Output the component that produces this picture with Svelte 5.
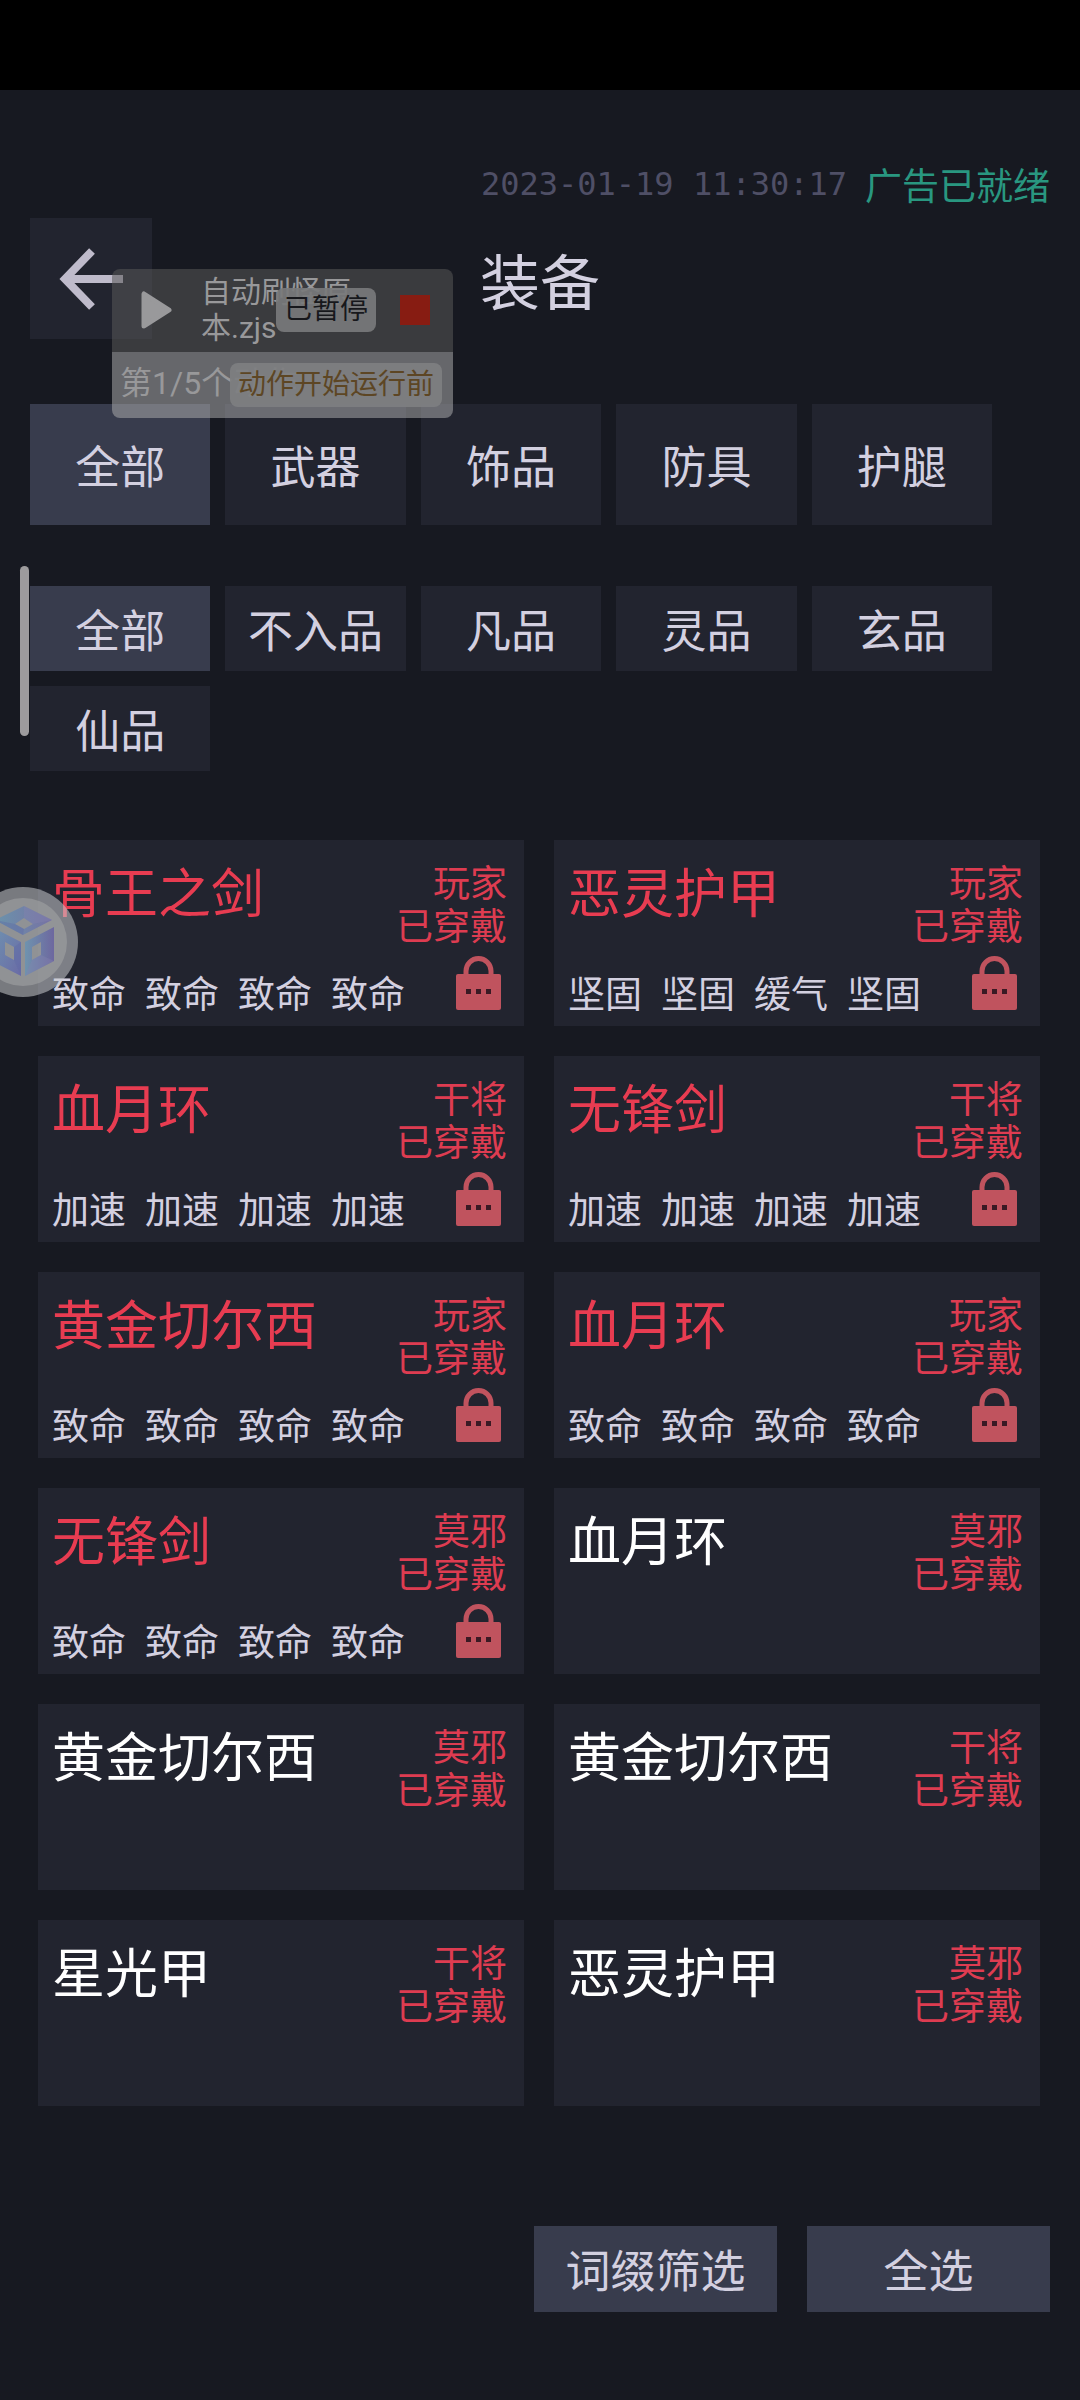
<script>
  const slots = ["全部", "武器", "饰品", "防具", "护腿"];
  const grades = ["全部", "不入品", "凡品", "灵品", "玄品", "仙品"];

  const items = [
    { name: "骨王之剑", owner: "玩家", rare: true, affixes: ["致命", "致命", "致命", "致命"] },
    { name: "恶灵护甲", owner: "玩家", rare: true, affixes: ["坚固", "坚固", "缓气", "坚固"] },
    { name: "血月环", owner: "干将", rare: true, affixes: ["加速", "加速", "加速", "加速"] },
    { name: "无锋剑", owner: "干将", rare: true, affixes: ["加速", "加速", "加速", "加速"] },
    { name: "黄金切尔西", owner: "玩家", rare: true, affixes: ["致命", "致命", "致命", "致命"] },
    { name: "血月环", owner: "玩家", rare: true, affixes: ["致命", "致命", "致命", "致命"] },
    { name: "无锋剑", owner: "莫邪", rare: true, affixes: ["致命", "致命", "致命", "致命"] },
    { name: "血月环", owner: "莫邪", rare: false, affixes: [] },
    { name: "黄金切尔西", owner: "莫邪", rare: false, affixes: [] },
    { name: "黄金切尔西", owner: "干将", rare: false, affixes: [] },
    { name: "星光甲", owner: "干将", rare: false, affixes: [] },
    { name: "恶灵护甲", owner: "莫邪", rare: false, affixes: [] },
  ];

  let slot = $state("全部");
  let grade = $state("全部");
</script>

<div class="statusbar"></div>

<main class="page">
  <div class="info">
    <time class="info__time" datetime="2023-01-19T11:30:17">2023-01-19 11:30:17</time>
    <span class="info__ad">广告已就绪</span>
  </div>

  <header class="header">
    <button class="back" aria-label="返回">
      <svg width="64" height="62" viewBox="0 0 64 62" fill="none" stroke="currentColor" stroke-width="8">
        <path d="M33 3 L6 31 L33 59 M6 31 H64" />
      </svg>
    </button>
    <h1 class="header__title">装备</h1>
  </header>

  <nav class="tabs">
    {#each slots as label}
      <button class="tab tab--tall" class:tab--active={slot === label} onclick={() => (slot = label)}>
        {label}
      </button>
    {/each}
  </nav>

  <nav class="tabs tabs--grade">
    {#each grades as label}
      <button class="tab" class:tab--active={grade === label} onclick={() => (grade = label)}>
        {label}
      </button>
    {/each}
  </nav>

  <section class="items">
    {#each items as item}
      <article class="card">
        <div class="card__top">
          <h2 class="card__name" class:card__name--rare={item.rare}>{item.name}</h2>
          <p class="card__owner">{item.owner}<br />已穿戴</p>
        </div>
        {#if item.affixes.length}
          <div class="card__bottom">
            <div class="card__affixes">
              {#each item.affixes as affix}
                <span>{affix}</span>
              {/each}
            </div>
            <svg class="card__lock" width="45" height="54" viewBox="0 0 45 54">
              <path d="M10 20 V15 A12.5 12.5 0 0 1 35 15 V20" fill="none" stroke="#c0535e" stroke-width="5" />
              <rect y="18" width="45" height="36" rx="2" fill="#c0535e" />
              <path d="M10 33h5v5h-5z M20 33h5v5h-5z M30 33h5v5h-5z" fill="#3a1a24" />
            </svg>
          </div>
        {/if}
      </article>
    {/each}
  </section>

  <footer class="actions">
    <button class="action">词缀筛选</button>
    <button class="action">全选</button>
  </footer>
</main>

<!-- floating script runner -->
<aside class="runner">
  <div class="runner__head">
    <button class="runner__button" aria-label="继续">
      <svg width="31" height="38" viewBox="0 0 31 38">
        <path d="M3 3 V35 L28 19 Z" fill="#99999b" stroke="#99999b" stroke-width="5" stroke-linejoin="round" />
      </svg>
    </button>
    <div class="runner__name">自动刷怪原本.zjs</div>
    <button class="runner__button runner__stop" aria-label="停止"></button>
  </div>
  <div class="runner__step">第1/5个动作</div>
  <div class="toast toast--state">已暂停</div>
  <div class="toast toast--event">动作开始运行前</div>
</aside>

<div class="edge-handle"></div>

<button class="ball" aria-label="悬浮球">
  <svg width="110" height="110" viewBox="0 0 110 110">
    <defs>
      <linearGradient id="face-top" x1="0" y1="0" x2="1" y2="0">
        <stop offset="0" stop-color="#6b93ab" />
        <stop offset="1" stop-color="#7672a4" />
      </linearGradient>
      <linearGradient id="face-left" x1="0" y1="0" x2="1" y2="1">
        <stop offset="0" stop-color="#6f93b0" />
        <stop offset="1" stop-color="#6a6ba6" />
      </linearGradient>
      <linearGradient id="face-right" x1="0" y1="0" x2="1" y2="0">
        <stop offset="0" stop-color="#6f93ae" />
        <stop offset="1" stop-color="#6d679f" />
      </linearGradient>
    </defs>
    <circle cx="55" cy="55" r="55" fill="#c9cbce" fill-opacity="0.55" />
    <circle cx="55" cy="55" r="44" fill="#a0a2a4" fill-opacity="0.6" />
    <path d="M56 19 L84 33 L55 48 L27 33 Z M56 31 L47 37 L56 42 L65 37 Z" fill="url(#face-top)" fill-rule="evenodd" />
    <path d="M24 40 L53 55 V89 L24 74 Z M37 55 V68 L46 73 V60 Z" fill="url(#face-left)" fill-rule="evenodd" />
    <path d="M86 40 V74 L57 89 V55 Z M73 55 L64 60 V73 L73 68 Z" fill="url(#face-right)" fill-rule="evenodd" />
    <path d="M56 19 L84 33 L65 37 L56 31 Z M86 74 L57 89 L64 73 L73 68 Z" fill="#8583b0" fill-opacity="0.4" />
    <path d="M27 33 L55 48 L56 42 L47 37 Z M53 55 V89 L46 73 V60 Z" fill="#5f6aa6" fill-opacity="0.4" />
  </svg>
</button>

<style>
  :global(body) {
    margin: 0;
    background: #171921;
    color: #d3d0e0;
    font-family: "Noto Sans CJK SC", sans-serif;
  }

  button {
    margin: 0;
    padding: 0;
    border: none;
    background: none;
    color: inherit;
    font: inherit;
    cursor: pointer;
  }

  svg {
    display: block;
  }

  .statusbar {
    height: 90px;
    background: #000;
  }

  .page {
    padding: 72px 30px 88px;
  }

  .info {
    display: flex;
    justify-content: flex-end;
    align-items: center;
    gap: 18px;
    line-height: 44px;
  }

  .info__time {
    color: #4f4f66;
    font-family: "DejaVu Sans Mono", monospace;
    font-size: 32px;
  }

  .info__ad {
    color: #299780;
    font-size: 37px;
  }

  .header {
    display: grid;
    grid-template-columns: 122px 1fr 122px;
    align-items: center;
    margin-top: 12px;
  }

  .back {
    display: flex;
    align-items: center;
    justify-content: center;
    height: 121px;
    background: #22242f;
    color: #bfbbcb;
  }

  .header__title {
    margin: 0;
    font-size: 60px;
    font-weight: 400;
    line-height: 80px;
    text-align: center;
  }

  .tabs {
    display: grid;
    grid-template-columns: repeat(5, 1fr);
    gap: 15px;
    margin: 65px 58px 0 0;
  }

  .tabs--grade {
    margin-top: 61px;
  }

  .tab {
    height: 85px;
    background: #22242f;
    font-size: 45px;
    line-height: 60px;
  }

  .tab--tall {
    height: 121px;
  }

  .tab--active {
    background: #383c4d;
  }

  .items {
    display: grid;
    grid-template-columns: 1fr 1fr;
    gap: 30px;
    margin: 69px 10px 0 8px;
  }

  .card {
    display: flex;
    flex-direction: column;
    justify-content: space-between;
    box-sizing: border-box;
    min-height: 186px;
    padding: 20px 17px 12px 14px;
    background: #22242f;
  }

  .card__top,
  .card__bottom {
    display: flex;
    justify-content: space-between;
  }

  .card__bottom {
    align-items: flex-end;
  }

  .card__name {
    margin: 0;
    color: #fff;
    font-size: 53px;
    font-weight: 400;
    line-height: 60px;
  }

  .card__name--rare {
    color: #e83c51;
  }

  .card__owner {
    margin: 0;
    color: #de3c51;
    font-size: 37px;
    line-height: 43px;
    text-align: right;
  }

  .card__affixes {
    display: flex;
    gap: 19px;
    font-size: 37px;
    line-height: 43px;
  }

  .card__lock {
    margin: 0 6px 4px 0;
  }

  .actions {
    display: flex;
    justify-content: flex-end;
    gap: 30px;
    margin-top: 120px;
  }

  .action {
    width: 243px;
    height: 86px;
    background: #383c4d;
    font-size: 45px;
    line-height: 60px;
  }

  .runner {
    position: absolute;
    top: 269px;
    left: 112px;
    width: 341px;
    border-radius: 8px;
    overflow: hidden;
    color: #98989a;
    font-family: Roboto, "Noto Sans CJK SC", sans-serif;
    font-size: 30px;
    line-height: 36px;
  }

  .runner__head {
    display: flex;
    align-items: center;
    gap: 29px;
    padding: 5px 23px 6px 29px;
    background: rgba(88, 88, 88, 0.55);
  }

  .runner__name {
    width: 150px;
    word-break: break-all;
  }

  .runner__stop {
    width: 30px;
    height: 30px;
    margin-left: auto;
    background: #871c12;
  }

  .runner__step {
    padding: 13px 8px 17px;
    background: rgba(167, 168, 169, 0.55);
    font-size: 32px;
    white-space: nowrap;
  }

  .toast {
    position: absolute;
    padding: 0 8px;
    border-radius: 8px;
    font-size: 28px;
    line-height: 44px;
    white-space: nowrap;
  }

  .toast--state {
    top: 19px;
    right: 77px;
    background: rgba(120, 121, 123, 0.92);
    color: #17181c;
  }

  .toast--event {
    top: 94px;
    right: 11px;
    background: rgba(126, 127, 129, 0.92);
    color: #5d4624;
  }

  .edge-handle {
    position: absolute;
    top: 566px;
    left: 20px;
    width: 9px;
    height: 170px;
    border-radius: 5px;
    background: #9d9b9d;
  }

  .ball {
    position: absolute;
    top: 887px;
    left: -32px;
  }
</style>
